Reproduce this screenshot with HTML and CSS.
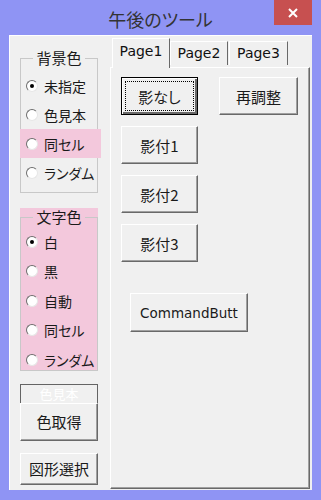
FILE: index.html
```html
<!DOCTYPE html>
<html lang="ja">
<head>
  <meta charset="UTF-8" />
  <meta name="viewport" content="width=device-width, initial-scale=1.0" />
  <title>午後のツール</title>
  <link rel="stylesheet" href="styles.css">
</head>
<body>
  <div class="window">
    <div class="titlebar">
      <span class="title">午後のツール</span>
      <span class="close">
        <svg width="10" height="10" viewBox="0 0 10 10"><path d="M1 1 L9 9 M9 1 L1 9" stroke="#fff" stroke-width="2" fill="none"/></svg>
      </span>
    </div>

    <div class="client">
      <div class="side">
        <div class="group">
          <div class="frame">
            <span class="legend">背景色</span>
            <div class="rows">
              <label class="radio"><span class="mark checked"></span>未指定</label>
              <label class="radio"><span class="mark"></span>色見本</label>
              <label class="radio hl"><span class="mark"></span>同セル</label>
              <label class="radio"><span class="mark"></span>ランダム</label>
            </div>
          </div>
        </div>

        <div class="group pink">
          <div class="frame">
            <span class="legend">文字色</span>
            <div class="rows">
              <label class="radio"><span class="mark checked"></span>白</label>
              <label class="radio"><span class="mark"></span>黒</label>
              <label class="radio"><span class="mark"></span>自動</label>
              <label class="radio"><span class="mark"></span>同セル</label>
              <label class="radio"><span class="mark"></span>ランダム</label>
            </div>
          </div>
        </div>

        <div class="swatch">色見本</div>
        <button class="btn btn-pick">色取得</button>
        <button class="btn btn-shape">図形選択</button>
      </div>

      <div class="tabs">
        <div class="tab-strip">
          <span class="tab active">Page1</span>
          <span class="tab tab-2">Page2</span>
          <span class="tab tab-3">Page3</span>
        </div>
        <div class="tab-page">
          <div class="btn-row">
            <button class="btn focus"><span class="focus-ring">影なし</span></button>
            <button class="btn wide">再調整</button>
          </div>
          <button class="btn">影付1</button>
          <button class="btn">影付2</button>
          <button class="btn">影付3</button>
          <button class="btn cmd">CommandButt</button>
        </div>
      </div>
    </div>
  </div>
</body>
</html>
```

FILE: styles.css
```css
body {
  margin: 0;
  font-family: "Noto Sans CJK JP", sans-serif;
  font-feature-settings: "palt";
  color: #1a1a1a;
}

.window {
  width: 321px;
  height: 500px;
  background: #8f94f4;
  overflow: hidden;
}

.titlebar {
  height: 35px;
  display: grid;
  grid-template-columns: 1fr auto 1fr;
}

.title {
  grid-column: 2;
  align-self: center;
  font-size: 18px;
  line-height: 22px;
  color: #333;
  margin-top: 2px;
}

.close {
  grid-column: 3;
  justify-self: end;
  width: 38px;
  height: 25px;
  margin-right: 9px;
  background: #c75050;
  display: flex;
  align-items: center;
  justify-content: center;
}

.client {
  margin: 0 9px;
  height: 455px;
  background: #f0f0f0;
  display: flex;
  box-sizing: border-box;
  border-top: 1px solid #fff;
  border-left: 1px solid #fff;
}

/* left column */
.side {
  width: 78px;
  margin-left: 10px;
  padding-top: 22px;
  display: flex;
  flex-direction: column;
}

.group {
  width: 78px;
}

.frame {
  border: 1px solid #c8c8c8;
  padding-bottom: 5px;
}

.legend {
  display: table;
  margin: -9px auto 0;
  padding: 0 3px;
  background: #f0f0f0;
  font-size: 15px;
  line-height: 16px;
}

.rows {
  padding-top: 5px;
}

.radio {
  height: 29px;
  display: flex;
  align-items: center;
  gap: 6px;
  padding-left: 5px;
  font-size: 14px;
  white-space: nowrap;
}

.radio.hl {
  background: #f3c8dc;
  margin: 0 -4px 0 -1px;
  padding-left: 6px;
}

.mark {
  width: 12px;
  height: 12px;
  box-sizing: border-box;
  border-radius: 50%;
  border: 1px solid;
  border-color: #6d6d6d #e6e6e6 #e6e6e6 #6d6d6d;
  background: #fff;
  display: flex;
  align-items: center;
  justify-content: center;
  flex: none;
}

.mark.checked::before {
  content: "";
  width: 4px;
  height: 4px;
  border-radius: 50%;
  background: #000;
}

.group.pink {
  margin-top: 15px;
  padding-top: 9px;
  background: #f3c8dc;
}

.pink .legend {
  background: #f3c8dc;
}

.pink .frame {
  padding-bottom: 0;
}

.pink .rows {
  padding-top: 2px;
  margin-bottom: -5px;
}

.pink .radio {
  height: 29.5px;
}

.swatch {
  margin-top: 13px;
  height: 19px;
  box-sizing: border-box;
  border: 1px solid #646464;
  border-bottom: none;
  color: #fff;
  font-size: 13px;
  line-height: 18px;
  text-align: center;
}

/* buttons */
.btn {
  font-family: inherit;
  font-feature-settings: "palt";
  font-size: 15px;
  color: #1a1a1a;
  background: #f0f0f0;
  width: 77px;
  height: 38px;
  padding: 0;
  box-sizing: border-box;
  border: 1px solid;
  border-color: #fff #696969 #696969 #fff;
  box-shadow: inset -1px -1px 0 #a0a0a0;
  flex: none;
}

.btn-pick {
  width: 78px;
}

.btn-shape {
  width: 78px;
  height: 32px;
  margin-top: 12px;
}

.btn.focus {
  border-color: #000;
  box-shadow: inset 1px 1px 0 #fff, inset -2px -2px 0 #696969;
  padding: 3px;
  display: flex;
}

.focus-ring {
  flex: 1;
  border: 1px dotted #000;
  display: flex;
  align-items: center;
  justify-content: center;
}

.btn.wide {
  width: 79px;
}

.btn.cmd {
  width: 118px;
  height: 39px;
  margin: 20px 0 0 9px;
  font-family: "DejaVu Sans", sans-serif;
  font-size: 13.5px;
}

/* tab control */
.tabs {
  width: 200px;
  margin-left: 12px;
  display: flex;
  flex-direction: column;
}

.tab-strip {
  height: 31px;
  display: flex;
  align-items: flex-end;
  padding-left: 2px;
}

.tab {
  height: 24px;
  box-sizing: border-box;
  border-left: 1px solid #fff;
  border-top: 1px solid #fff;
  border-right: 1px solid #696969;
  font-family: "DejaVu Sans", sans-serif;
  font-size: 14px;
  line-height: 22px;
  color: #111;
  text-align: center;
  margin-bottom: 2px;
}

.tab.active {
  height: 30px;
  width: 58px;
  margin-bottom: -1px;
  background: #f0f0f0;
  line-height: 24px;
  position: relative;
}

.tab-2 {
  width: 58px;
}

.tab-3 {
  width: 59px;
  margin-left: 1px;
}

.tab-page {
  flex: 1;
  border-top: 1px solid #fff;
  border-left: 1px solid #fff;
  border-right: 1px solid #696969;
  border-bottom: 1px solid #696969;
  box-shadow: inset -1px -1px 0 #a0a0a0;
  margin-bottom: 1px;
  padding: 9px 0 0 10px;
  display: flex;
  flex-direction: column;
  align-items: flex-start;
  gap: 11px;
}

.btn-row {
  display: flex;
  gap: 21px;
}
```
